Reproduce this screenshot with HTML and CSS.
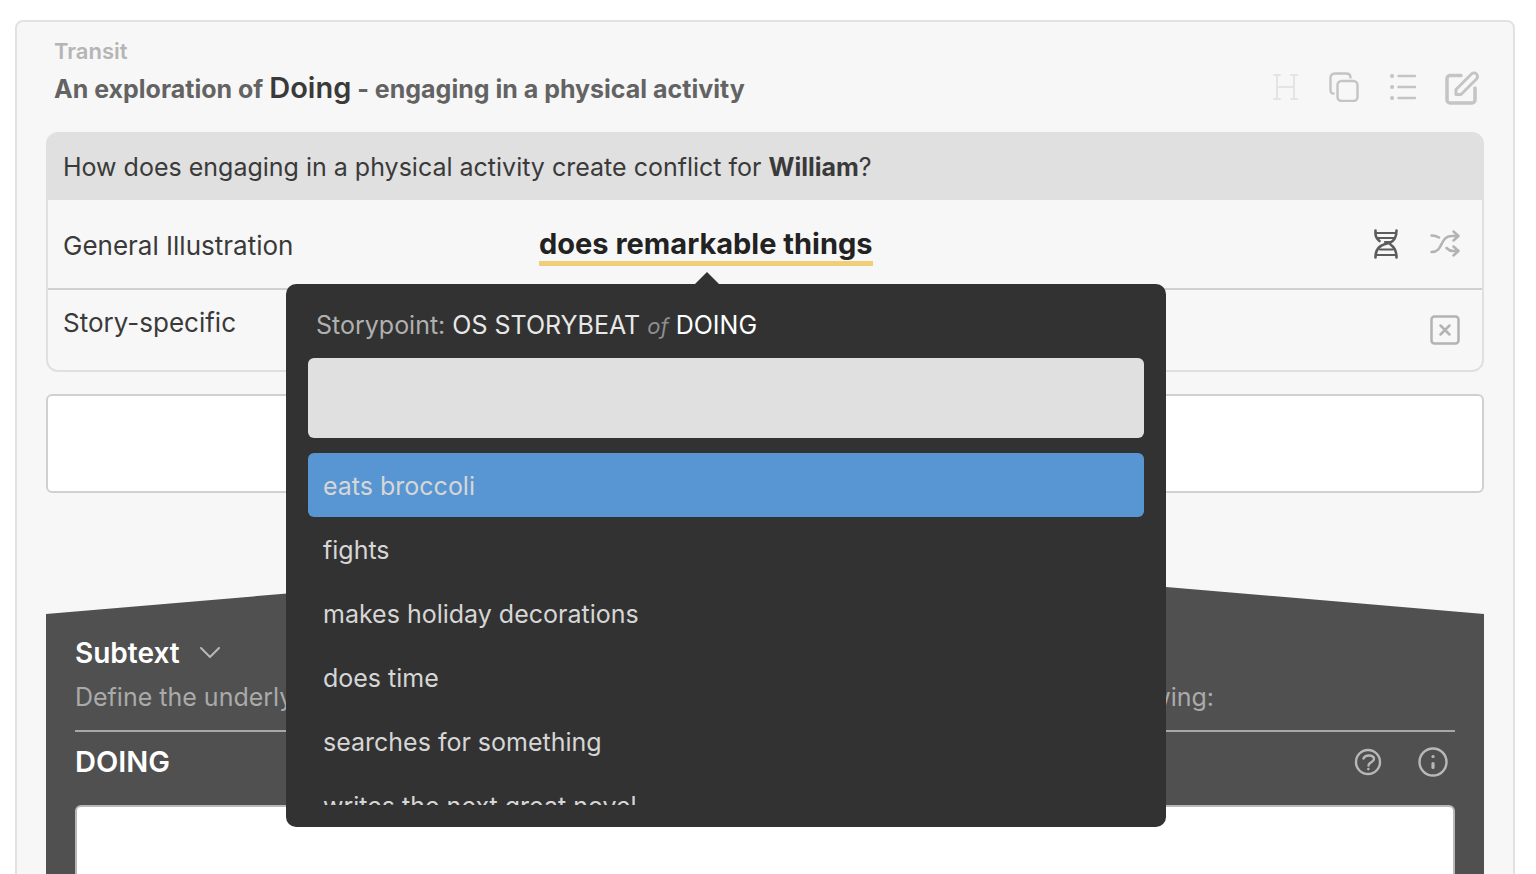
FILE: index.html
```html
<!DOCTYPE html>
<html lang="en">

<head>
    <meta charset="UTF-8">
    <meta name="viewport" content="width=device-width, initial-scale=1.0">
    <title>Transit - Doing</title>
    <link rel="stylesheet" href="styles.css">
</head>

<body>
    <main class="card">
        <header class="card-header">
            <div>
                <p class="eyebrow">Transit</p>
                <h1 class="title">An exploration of <strong>Doing</strong> - engaging in a physical activity</h1>
            </div>
            <div class="icons">
                <button type="button" class="icon faint" aria-label="Heading">
                    <svg width="28" height="28" viewBox="0 0 28 28" stroke-width="2">
                        <path d="M6 2v24M23 2v24M6 14h17M3 2h6M20 2h6M3 26h6M20 26h6" />
                    </svg>
                </button>
                <button type="button" class="icon" aria-label="Copy">
                    <svg width="30" height="30" viewBox="0 0 30 30" stroke-width="2.4">
                        <rect x="8.5" y="9" width="20" height="20" rx="4" />
                        <path d="M4.500 21.500C2 21.500 1.500 19.500 1.500 18V5.500a4 4 0 0 1 4-4H17c3 0 4.500 1.500 4.500 4" />
                    </svg>
                </button>
                <button type="button" class="icon" aria-label="List">
                    <svg width="28" height="28" viewBox="0 0 28 28" stroke-width="2.4">
                        <path d="M9.500 3h16.500M9.500 14h16.500M9.500 25h16.500" />
                        <path stroke-width="4" d="M3 3h.1M3 14h.1M3 25h.1" />
                    </svg>
                </button>
                <button type="button" class="icon" aria-label="Edit">
                    <svg width="36" height="36" viewBox="0 0 36 36" stroke-width="3.5" stroke-linecap="butt">
                        <path d="M17 6.500H6a3 3 0 0 0-3 3V31a3 3 0 0 0 3 3h22a3 3 0 0 0 3-3V19" />
                        <path stroke-width="3" d="M12 20.500 27.500 5a3.500 3.500 0 0 1 5 5L17 25.500h-5z" />
                    </svg>
                </button>
            </div>
        </header>

        <section class="panel">
            <h2 class="question">How does engaging in a physical activity create conflict for <strong>William</strong>?</h2>
            <div class="row illustration">
                <span class="label">General Illustration</span>
                <div class="phrase-wrap">
                    <button type="button" class="phrase" aria-expanded="true">does remarkable things</button>

                    <div class="popover">
                        <label class="popover-title" for="search">Storypoint: <b>OS STORYBEAT</b> <i>of</i> <b class="bright">DOING</b></label>
                        <input class="search" id="search" type="text">
                        <ul class="options" role="listbox" aria-label="Illustrations">
                            <li class="option selected" role="option" aria-selected="true">eats broccoli</li>
                            <li class="option" role="option">fights</li>
                            <li class="option" role="option">makes holiday decorations</li>
                            <li class="option" role="option">does time</li>
                            <li class="option" role="option">searches for something</li>
                            <li class="option" role="option">writes the next great novel</li>
                        </ul>
                    </div>
                </div>
                <div class="icons">
                    <button type="button" class="icon dark" aria-label="Genes">
                        <svg width="24" height="30" viewBox="0 0 24 30" stroke-width="2.6">
                            <path d="M1.500 1.500v3C1.500 8 3 10 5.500 12M22.500 1.500C22.500 8 20.500 12 15.500 14C9 15.500 1.500 17 1.500 28.500M22.500 28.500c0-6-1.500-10-6-13" />
                            <path stroke-width="2.2" d="M2 4h20M3 9h17M11 13h5M6 20.500h13M2 26h20" />
                        </svg>
                    </button>
                    <button type="button" class="icon mid" aria-label="Shuffle">
                        <svg width="30" height="28" viewBox="0 0 30 28" stroke-width="2.5">
                            <path d="M1.500 5.500c3 0 5 .5 7.500 2M1.500 22C14 22 9 6 22 6h6M23.500 1.500 28.500 6l-5 4.500M16.500 18c2.500 2.500 4 3 6.500 3h5M23.500 16.500l5 4.500-5 4.500" />
                        </svg>
                    </button>
                </div>
            </div>
            <div class="row specific">
                <span class="label">Story-specific</span>
                <div class="icons">
                    <button type="button" class="icon mid" aria-label="Clear">
                        <svg width="30" height="30" viewBox="0 0 30 30" stroke-width="2.5">
                            <rect x="1.5" y="1.5" width="27" height="27" rx="3" />
                            <path d="m10.500 10.500 9 9M19.500 10.500l-9 9" />
                        </svg>
                    </button>
                </div>
            </div>
        </section>

        <textarea class="note" aria-label="Illustration notes"></textarea>

        <section class="subtext">
            <h2 class="subtext-title">
                <button type="button" class="toggle">Subtext
                    <svg width="20" height="12" viewBox="0 0 20 12" stroke-width="2">
                        <path d="m1 1 9 9 9-9" />
                    </svg>
                </button>
            </h2>
            <p class="hint">Define the underlying source of conflict in this Transit for your story by addressing the following:</p>
            <div class="subtext-head">
                <label for="doing">DOING</label>
                <div class="icons">
                    <button type="button" class="icon light" aria-label="Help">
                        <svg width="28" height="28" viewBox="0 0 28 28" stroke-width="2.4">
                            <circle cx="14" cy="14" r="12" />
                            <path d="M9.500 10.500c2-4.500 10.500-3.500 10.500.5 0 3.500-5.500 3-5.500 6.500M14.300 21h.1" />
                        </svg>
                    </button>
                    <button type="button" class="icon light" aria-label="Info">
                        <svg width="30" height="30" viewBox="0 0 30 30" stroke-width="2.4">
                            <circle cx="15" cy="15" r="13.5" />
                            <path stroke-width="3.2" d="M15 9.500h.1M15 16.500v4" />
                        </svg>
                    </button>
                </div>
            </div>
            <textarea class="answer" id="doing"></textarea>
        </section>
    </main>
</body>

</html>
```
FILE: styles.css
```css
* {
    box-sizing: border-box;
}

body {
    margin: 0;
    height: 100vh;
    overflow: hidden;
    padding: 20px 21px 0 15px;
    background: #fff;
    color: #3a3a3a;
    font-family: Inter, "Liberation Sans", sans-serif;
    font-size: 25px;
    line-height: 32px;
}

h1,
h2,
p,
ul {
    margin: 0;
    padding: 0;
    font-size: inherit;
}

button {
    padding: 0;
    border: none;
    background: none;
    color: inherit;
    font: inherit;
    cursor: pointer;
}

svg {
    display: block;
    flex: none;
    fill: none;
    stroke: currentColor;
    stroke-linecap: round;
    stroke-linejoin: round;
}

.card {
    padding: 13px 29px 30px;
    border: 2px solid #e2e2e2;
    border-radius: 8px;
    background: #f7f7f7;
}

.card-header {
    display: flex;
    justify-content: space-between;
    align-items: flex-end;
    padding: 0 4px 25px 8px;
}

.card-header .icons {
    padding-bottom: 2px;
}

.eyebrow {
    color: #b5b5b5;
    font-size: 22px;
    font-weight: 600;
}

.title {
    padding-top: 3px;
    color: #636363;
    font-size: 25px;
    font-weight: 700;
    line-height: 36px;
}

.title strong {
    color: #3a3a3a;
    font-size: 29px;
    font-weight: 600;
}

.icons {
    display: flex;
    align-items: center;
    gap: 23px;
}

.icon {
    display: flex;
    justify-content: center;
    width: 36px;
    color: #c4c4c4;
}

.icon.faint {
    color: #e4e4e4;
}

.icon.mid {
    color: #b3b3b3;
}

.icon.dark {
    color: #5c5c5c;
}

.icon.light {
    color: #b8b8b8;
}

.panel {
    border: 2px solid #e0e0e0;
    border-radius: 12px;
}

.question {
    padding: 17px 15px;
    border-radius: 8px 8px 0 0;
    background: #e0e0e0;
    font-weight: 400;
}

.question strong {
    font-weight: 700;
}

.row {
    display: flex;
    padding: 0 19px 0 15px;
}

.row .icons {
    margin-left: auto;
}

.label {
    font-size: 26px;
}

.illustration {
    align-items: center;
    height: 90px;
    border-bottom: 2px solid #d0d0d0;
}

.illustration .label {
    width: 34%;
    padding-top: 4px;
}

.specific {
    height: 80px;
    padding-top: 17px;
    padding-bottom: 17px;
}

.phrase-wrap {
    position: relative;
    margin-top: 4px;
}

.phrase {
    display: block;
    border-bottom: 5px solid #f1cf78;
    color: #222;
    font-size: 29px;
    font-weight: 700;
    line-height: 34px;
}

.phrase-wrap::after {
    content: "";
    position: absolute;
    top: 45px;
    left: 50%;
    margin-left: -12px;
    border: 13px solid transparent;
    border-top: 0;
    border-bottom-color: #323232;
}

.popover {
    position: absolute;
    top: 57px;
    left: -253px;
    width: 880px;
    z-index: 1;
    padding: 25px 22px 22px;
    border-radius: 10px;
    background: #323232;
    color: #d6d6d6;
}

.popover-title {
    display: block;
    padding: 0 8px 16px;
    color: #b0b0b0;
}

.popover-title b {
    color: #e8e8e8;
    font-weight: 400;
}

.popover-title i {
    color: #8e8e8e;
    font-size: 22px;
}

.popover-title .bright {
    color: #fff;
}

.search {
    display: block;
    width: 100%;
    height: 80px;
    padding: 0 15px;
    border: none;
    border-radius: 6px;
    background: #e0e0e0;
    font: inherit;
}

.options {
    height: 352px;
    margin-top: 15px;
    overflow: hidden;
    list-style: none;
}

.option {
    padding: 17px 15px 15px;
    border-radius: 6px;
}

.option.selected {
    background: #5896d3;
}

.note,
.answer {
    display: block;
    width: 100%;
    padding: 15px;
    border: 2px solid #d0d0d0;
    border-radius: 6px;
    background: #fff;
    font: inherit;
    resize: none;
}

.note {
    height: 99px;
    margin-top: 22px;
}

/* roof shaped panel, the peak sits in the middle */
.subtext {
    margin-top: 60px;
    padding: 82px 29px 30px;
    background: #505050;
    clip-path: polygon(0 61px, 50% 0, 100% 61px, 100% 100%, 0 100%);
}

.subtext-title {
    color: #fff;
    font-size: 28px;
    font-weight: 600;
    line-height: 36px;
}

.toggle {
    display: flex;
    align-items: center;
    gap: 20px;
}

.toggle svg {
    color: #b8b8b8;
}

.hint {
    padding: 10px 0 17px;
    border-bottom: 2px solid #a8a8a8;
    color: #aaa;
}

.subtext-head {
    display: flex;
    justify-content: space-between;
    padding: 14px 4px 27px 0;
    color: #fff;
    font-size: 29px;
    font-weight: 600;
}

.subtext-head .icons {
    gap: 29px;
}

.answer {
    height: 160px;
    border-color: #b8b8b8;
}
```
